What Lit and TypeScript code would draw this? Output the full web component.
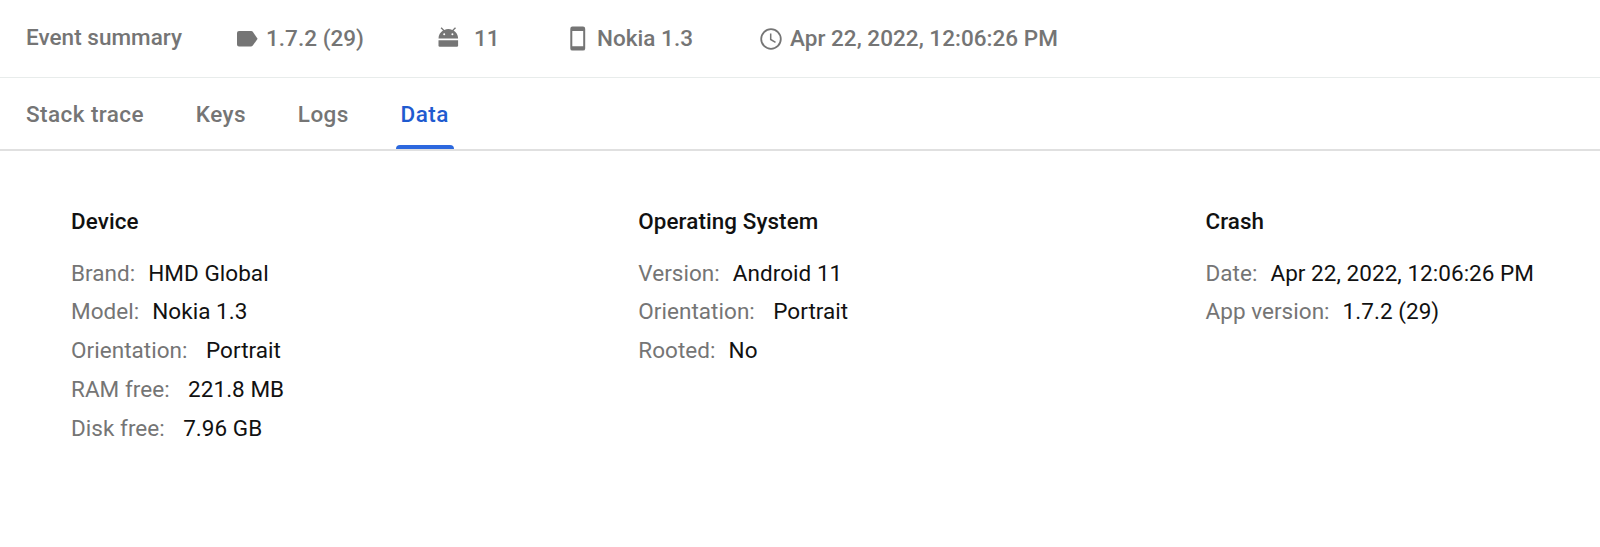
import { LitElement, html, css, svg } from "lit";
import { customElement, property, state } from "lit/decorators.js";

interface Field {
  label: string;
  value: string;
  wide?: boolean;
}

interface Group {
  title: string;
  fields: Field[];
}

const GROUPS: Group[] = [
  {
    title: "Device",
    fields: [
      { label: "Brand:", value: "HMD Global" },
      { label: "Model:", value: "Nokia 1.3" },
      { label: "Orientation:", value: "Portrait", wide: true },
      { label: "RAM free:", value: "221.8 MB", wide: true },
      { label: "Disk free:", value: "7.96 GB", wide: true },
    ],
  },
  {
    title: "Operating System",
    fields: [
      { label: "Version:", value: "Android 11" },
      { label: "Orientation:", value: "Portrait", wide: true },
      { label: "Rooted:", value: "No" },
    ],
  },
  {
    title: "Crash",
    fields: [
      { label: "Date:", value: "Apr 22, 2022, 12:06:26 PM" },
      { label: "App version:", value: "1.7.2 (29)" },
    ],
  },
];

const TABS = ["Stack trace", "Keys", "Logs", "Data"];

@customElement("event-summary")
class EventSummary extends LitElement {
  static styles = css`
    :host {
      display: flex;
      height: 77px;
      box-sizing: content-box;
      border-bottom: 1px solid #e8eceb;
      padding-left: 26px;
      color: #757575;
      font-weight: 500;
      line-height: 28px;
      letter-spacing: 0.03px;
      white-space: nowrap;
    }
    .title {
      width: 210px;
      padding-top: 23px;
    }
    .item {
      display: flex;
      padding-top: 24px;
    }
    svg {
      display: block;
      flex: none;
      fill: currentColor;
    }
    .version { width: 200px; }
    .version svg { width: 21px; height: 16px; margin: 7px 8px 0 1px; }
    .os { width: 132px; }
    .os svg { width: 21px; height: 20px; margin: 3px 15px 0 2px; }
    .device { width: 191px; }
    .device svg { width: 16px; height: 25px; margin: 2px 11px 0 2px; }
    .time svg { width: 22px; height: 22px; margin: 4px 8px 0 1px; }
    .clock { fill: none; stroke: currentColor; }
  `;

  render() {
    return html`
      <div class="title">Event summary</div>
      <div class="item version">
        <svg viewBox="0 0 21 16">${svg`<path d="M2 0H14.2Q15.2 0 15.8.8L20.6 7.7 15.8 14.6Q15.2 15.4 14.2 15.4H2Q0 15.4 0 13.4V2Q0 0 2 0Z"/>`}</svg>
        <span>1.7.2 (29)</span>
      </div>
      <div class="item os">
        <svg viewBox="0 0 21 20">${svg`
          <path fill-rule="evenodd" d="M.5 11.6C.5 8 2.3 5.2 5 3.6L2.6 1.2 3.6.2 6.3 2.9A10 10 0 0 1 14.3 2.9L17 .2 18 1.2 15.6 3.6C18.3 5.2 20.1 8 20.1 11.6ZM6.2 6.2A1 1 0 1 0 6.2 8.2A1 1 0 1 0 6.2 6.2ZM14.4 6.2A1 1 0 1 0 14.4 8.2A1 1 0 1 0 14.4 6.2Z"/>
          <path d="M.5 13.3H20.1V18.5Q20.1 19.7 18.9 19.7H1.7Q.5 19.7 .5 18.5Z"/>`}</svg>
        <span>11</span>
      </div>
      <div class="item device">
        <svg viewBox="0 0 16 25">${svg`<path fill-rule="evenodd" d="M2.4.6H13Q15.2.6 15.2 2.8V22.4Q15.2 24.6 13 24.6H2.4Q.3 24.6 .3 22.4V2.8Q.3.6 2.4.6ZM2.3 4.9V20.3H13.2V4.9Z"/>`}</svg>
        <span>Nokia 1.3</span>
      </div>
      <div class="item time">
        <svg class="clock" viewBox="0 0 22 22">${svg`
          <circle cx="11" cy="11" r="9.8" stroke-width="1.8"/>
          <path stroke-width="1.5" d="M10.7 5.4V11.5L15.5 14.3"/>`}</svg>
        <span>Apr 22, 2022, 12:06:26 PM</span>
      </div>
    `;
  }
}

@customElement("tab-strip")
class TabStrip extends LitElement {
  @state() active = "Data";

  static styles = css`
    :host {
      display: flex;
      gap: 35.8px;
      height: 71px;
      border-bottom: 2px solid #e0e0e0;
      padding-left: 18px;
      color: #757575;
      font-weight: 500;
      line-height: 28px;
      letter-spacing: 0.43px;
      white-space: nowrap;
    }
    .tab {
      display: flex;
      flex-direction: column;
      justify-content: space-between;
      box-sizing: border-box;
      padding: 22px 0 0;
      cursor: pointer;
    }
    .name { padding: 0 8px; }
    .bar { height: 4.5px; margin: 0 3px; border-radius: 4px 4px 0 0; }
    .active { color: #1f5bd0; }
    .active .bar { background: #2c68de; }
  `;

  render() {
    return TABS.map(
      (name) => html`
        <div class="tab ${name === this.active ? "active" : ""}" @click=${() => (this.active = name)}>
          <span class="name">${name}</span>
          <span class="bar"></span>
        </div>
      `,
    );
  }
}

@customElement("data-group")
class DataGroup extends LitElement {
  @property({ attribute: false }) group!: Group;

  static styles = css`
    :host { display: block; white-space: nowrap; color: #111; letter-spacing: 0.04px; }
    .heading { font-size: 22.4px; font-weight: 500; line-height: 28px; letter-spacing: 0.1px; margin-bottom: 18.5px; }
    .row { display: flex; gap: 13px; height: 38.75px; line-height: 38.75px; }
    .wide { gap: 18.4px; }
    .label { color: #757575; }
  `;

  render() {
    return html`
      <div class="heading">${this.group.title}</div>
      ${this.group.fields.map(
        (f) => html`<div class="row ${f.wide ? "wide" : ""}">
          <span class="label">${f.label}</span><span>${f.value}</span>
        </div>`,
      )}
    `;
  }
}

@customElement("app-root")
class AppRoot extends LitElement {
  static styles = css`
    :host {
      display: block;
      height: 547px;
      overflow: hidden;
      background: #fff;
      font: 400 22.5px Roboto, sans-serif;
    }
    .columns {
      display: grid;
      grid-template-columns: 567.3px 567.2px 1fr;
      padding: 56px 0 0 71px;
    }
  `;

  render() {
    return html`
      <event-summary></event-summary>
      <tab-strip></tab-strip>
      <div class="columns">
        ${GROUPS.map((g) => html`<data-group .group=${g}></data-group>`)}
      </div>
    `;
  }
}
